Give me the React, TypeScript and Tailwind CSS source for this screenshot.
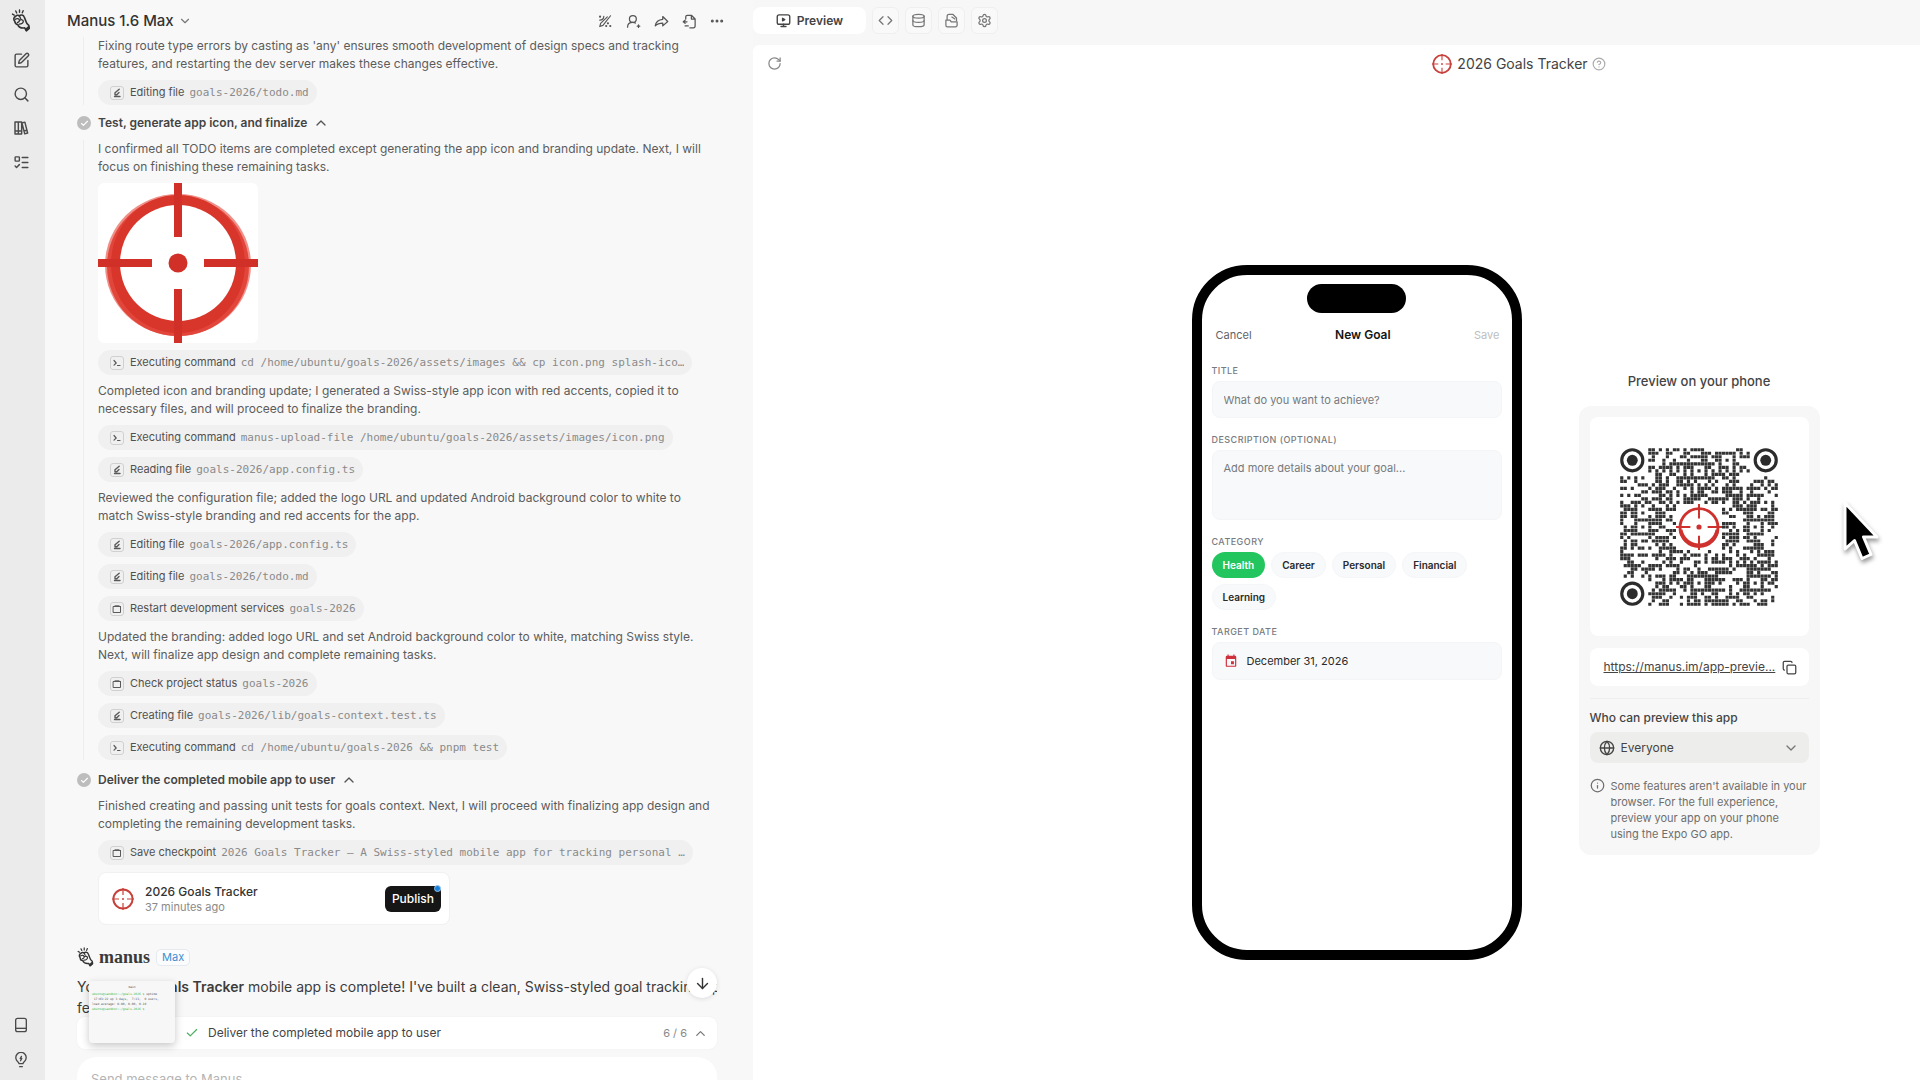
import React from "react";
import {
  ArrowDown,
  Check,
  ChevronDown,
  ChevronUp,
  CircleHelp,
  Code,
  Copy,
  Database,
  Ellipsis,
  Globe,
  Info,
  ListTodo,
  RotateCw,
  Search,
  Settings,
  SquarePen,
} from "lucide-react";

type IconProps = { className?: string };

function Target({ className }: IconProps) {
  return (
    <svg viewBox="0 0 160 160" className={className} aria-hidden="true">
      <ellipse cx="80" cy="82" rx="73" ry="71" fill="#ef8f88" />
      <ellipse cx="80" cy="83" rx="71" ry="70" fill="#e2463b" />
      <ellipse cx="80" cy="81" rx="67" ry="69" fill="#d8352b" />
      <circle cx="80" cy="80" r="58" fill="#fff" />
      <g fill="#d03028">
        <rect x="76" y="0" width="8" height="54" />
        <rect x="76" y="106" width="8" height="54" />
        <rect x="0" y="76" width="54" height="8" />
        <rect x="106" y="76" width="54" height="8" />
        <circle cx="80" cy="80" r="9.5" />
      </g>
    </svg>
  );
}

function TargetBadge({ className }: IconProps) {
  return (
    <svg viewBox="0 0 160 160" className={className} fill="none" stroke="#cf322e" aria-hidden="true">
      <circle cx="80" cy="82" r="66" strokeWidth="10" />
      <path d="M16 90a65 65 0 0 0 128 0" strokeWidth="13" />
      <path d="M80 0v50M80 110v50M0 80h50M110 80h50" strokeWidth="7" />
      <circle cx="80" cy="80" r="9" fill="#cf322e" stroke="none" />
    </svg>
  );
}

function TargetThin({ className }: IconProps) {
  return (
    <svg viewBox="0 0 24 24" className={className} fill="none" stroke="#c8403a" aria-hidden="true">
      <circle cx="12" cy="12" r="9.6" strokeWidth="2" />
      <path d="M12 1v7M12 16v7M1 12h7M16 12h7" strokeWidth="1.2" />
      <circle cx="12" cy="12" r="1" fill="#c8403a" stroke="none" />
    </svg>
  );
}

function ManusMark({ className }: IconProps) {
  return (
    <svg
      viewBox="0 0 24 28"
      className={className}
      fill="none"
      stroke="currentColor"
      strokeWidth="2"
      strokeLinecap="round"
      strokeLinejoin="round"
      aria-hidden="true"
    >
      <path d="M5.600 2.400l1.200 2.400M10.200 1.200v2.800M14.600 2l-1 2.600M1.600 6.200l2.200 1.200" strokeWidth="1.700" />
      <path d="M4.500 15C2.500 13 3 9.500 5.500 9C6 7.500 9 7 10 8.500C11.500 6.500 15 7 15.800 9.500L17.800 14.500C18.500 17 19.500 18.500 21.500 20L22 23.500L18.500 26.500L16.500 23C13 23.500 9.500 22.500 8 19C6 19 4.500 17 4.500 15Z" />
      <path d="M5 12.500c2-1.500 4.500-1 5 .8.500 2-1.200 3-2.500 3.200M10 8.500l1.600 3M10.500 13.500c2-1 4-.5 4.300 1.300.2 2-1.800 3.600-5 3.700" strokeWidth="1.600" />
      <path d="M18.600 25l2.600-2.400" strokeWidth="3.200" />
    </svg>
  );
}

function BooksIcon({ className }: IconProps) {
  return (
    <svg viewBox="0 0 24 24" className={className} fill="none" stroke="currentColor" strokeWidth="2.200" strokeLinejoin="round" aria-hidden="true">
      <path d="M3 3h5v18H3zM8 3h5v18H8zM13.400 4.400l4.400-1.200L22 19.600l-4.400 1.200zM3 16.500h10M16.400 16.600l4.400-1.200" />
    </svg>
  );
}

function TabletIcon({ className }: IconProps) {
  return (
    <svg viewBox="0 0 24 24" className={className} fill="none" stroke="currentColor" strokeWidth="2" strokeLinejoin="round" aria-hidden="true">
      <rect x="4" y="2" width="16" height="20" rx="3" />
      <path d="M4 17h16" />
    </svg>
  );
}

function BulbIcon({ className }: IconProps) {
  return (
    <svg viewBox="0 0 24 24" className={className} fill="none" stroke="currentColor" strokeWidth="2" strokeLinecap="round" strokeLinejoin="round" aria-hidden="true">
      <path d="M9 17.500c0-1.500-1-2.200-2.200-3.300a7.800 7.800 0 1 1 10.400 0C16 15.300 15 16 15 17.500zM10 22h4" />
      <path d="M12.700 6.500l-1.900 3.300h2.400l-1.900 3.300" />
    </svg>
  );
}

function WandIcon({ className }: IconProps) {
  return (
    <svg viewBox="0 0 24 24" className={className} fill="none" stroke="currentColor" strokeWidth="2" strokeLinecap="round" strokeLinejoin="round" aria-hidden="true">
      <path d="M21.500 3L8.500 19.500 3 21.500l1.500-5.500L16 5M3 10.500c3.500 0 6.500-2.500 7-6.500" />
      <path d="M17 16h.1M21 20.500h.1M14 20.500h.1M3.500 4.500h.1" strokeWidth="3.600" />
    </svg>
  );
}

function UserDotIcon({ className }: IconProps) {
  return (
    <svg viewBox="0 0 24 24" className={className} fill="none" stroke="currentColor" strokeWidth="2" strokeLinecap="round" strokeLinejoin="round" aria-hidden="true">
      <circle cx="11" cy="8" r="5.500" />
      <path d="M2.500 21c0-4.500 3.500-7.500 8.500-7.500 1.800 0 3 .4 4 1M18 19.500h4M20 17.500v4" />
    </svg>
  );
}

function ForwardIcon({ className }: IconProps) {
  return (
    <svg viewBox="0 0 24 24" className={className} fill="none" stroke="currentColor" strokeWidth="2" strokeLinejoin="round" aria-hidden="true">
      <path d="M14 4l8 8-8 7v-4.500c-5 0-8.500.5-12 4.500 1-6.500 5-10 12-10.500z" />
    </svg>
  );
}

function FileOutIcon({ className }: IconProps) {
  return (
    <svg viewBox="0 0 24 24" className={className} fill="none" stroke="currentColor" strokeWidth="2" strokeLinecap="round" strokeLinejoin="round" aria-hidden="true">
      <path d="M6 8V4.500A2.500 2.500 0 0 1 8.500 2H15l6 6v11.500a2.500 2.500 0 0 1-2.500 2.500h-6M15 2v6h6" />
      <path d="M2 12.500h6M2 12.500l3-2.500M2 12.500l3 2.500M5 19h5" />
    </svg>
  );
}

function MonitorIcon({ className }: IconProps) {
  return (
    <svg viewBox="0 0 24 24" className={className} fill="none" stroke="currentColor" strokeWidth="2.200" strokeLinecap="round" strokeLinejoin="round" aria-hidden="true">
      <rect x="2" y="3" width="20" height="15" rx="3" />
      <path d="M12 18v3M8 21.500h8" />
      <path d="M10.500 8.500v4l3.500-2z" fill="currentColor" />
    </svg>
  );
}

function FileFoldIcon({ className }: IconProps) {
  return (
    <svg viewBox="0 0 24 24" className={className} fill="none" stroke="currentColor" strokeWidth="2" strokeLinejoin="round" aria-hidden="true">
      <path d="M5 11V5a3 3 0 0 1 3-3h6l6 6v5" />
      <path d="M3 11.500h6.500l2 2.500H21v5.500a2.500 2.500 0 0 1-2.500 2.500h-13A2.500 2.500 0 0 1 3 19.500zM12 6l6 4" />
    </svg>
  );
}

type ChipKind = "edit" | "term" | "box";

function ChipIcon({ kind }: { kind: ChipKind }) {
  return (
    <span className="flex size-[14px] shrink-0 items-center justify-center rounded-[3px] border border-[#d0d0d0] bg-[#f0f0f0] text-[#5a5a5a]">
      <svg viewBox="0 0 12 12" className="size-3" fill="none" stroke="currentColor" strokeWidth="1.2" strokeLinecap="round" strokeLinejoin="round" aria-hidden="true">
        {kind === "edit" && <path d="M8.200 2.200L4 5.800v2h1.800L8 5.500M3.500 9.500h5.500" strokeWidth="1.400" />}
        {kind === "term" && <path d="M3 3.500L5.200 6 3 8.200M6.500 8.500h2.500" />}
        {kind === "box" && <path d="M2.500 3.500h7v6h-7zM2.500 3.500h7M4 2.800h4" strokeWidth="1" />}
      </svg>
    </span>
  );
}

function Chip({ kind, label, code }: { kind: ChipKind; label: string; code: string }) {
  return (
    <button className="flex h-[25px] max-w-full items-center self-start rounded-full bg-[#f0f0f0] pr-2 pl-3 text-left">
      <ChipIcon kind={kind} />
      <span className="ml-[6px] flex min-w-0 items-baseline gap-[5px]">
        <span className="shrink-0 text-[11px] leading-4 text-[#505050]">{label}</span>
        <span className="truncate font-['DejaVu_Sans_Mono',monospace] text-[11px] leading-4 text-[#8a8a8a]">{code}</span>
      </span>
    </button>
  );
}

function Para({ children }: { children: React.ReactNode }) {
  return <p className="text-[12px] leading-[18px] text-[#5c5c5c]">{children}</p>;
}

function StepTitle({ children }: { children: React.ReactNode }) {
  return (
    <button className="flex h-5 items-center self-start">
      <span className="flex size-[14px] items-center justify-center rounded-full bg-[#bdbdbd] text-white">
        <Check className="size-[9px]" strokeWidth={3} />
      </span>
      <span className="ml-[7px] text-[12px] font-semibold text-[#444]">{children}</span>
      <ChevronUp className="ml-[6px] size-4 text-[#555]" />
    </button>
  );
}

const N = 45;

function inFinder(r: number, c: number) {
  return (r < 8 && c < 8) || (r < 8 && c > N - 9) || (r > N - 9 && c < 8);
}

function moduleOn(r: number, c: number) {
  if (inFinder(r, c)) return false;
  if (Math.abs(r - 22) <= 6 && Math.abs(c - 22) <= 6) return false;
  const marks = [6, 22, 38];
  for (const a of marks) {
    for (const b of marks) {
      const dr = Math.abs(r - a);
      const dc = Math.abs(c - b);
      const corner = (a === 6 && b === 6) || (a === 6 && b === 38) || (a === 38 && b === 6);
      if (!corner && dr <= 2 && dc <= 2) return Math.max(dr, dc) !== 1;
    }
  }
  if (r === 6 || c === 6) return (r + c) % 2 === 0;
  let h = (r * 374761393 + c * 668265263) | 0;
  h = Math.imul(h ^ (h >>> 13), 1274126177);
  h = h ^ (h >>> 16);
  return (h & 1023) < 510;
}

function QrCode() {
  let d = "";
  for (let r = 0; r < N; r++) {
    for (let c = 0; c < N; c++) {
      if (moduleOn(r, c)) d += `M${c * 10 + 0.5} ${r * 10 + 0.5}h9v9h-9z`;
    }
  }
  const finders = [
    [35, 35],
    [415, 35],
    [35, 415],
  ];
  return (
    <svg viewBox="0 0 450 450" className="size-[158px]" role="img" aria-label="QR code">
      <path d={d} fill="#333" />
      {finders.map(([x, y]) => (
        <g key={`${x}-${y}`}>
          <circle cx={x} cy={y} r="30" fill="none" stroke="#2c2c2c" strokeWidth="9" />
          <circle cx={x} cy={y} r="15.500" fill="#2c2c2c" />
        </g>
      ))}
    </svg>
  );
}

function Sidebar() {
  const item = "flex size-6 items-center justify-center";
  return (
    <nav className="flex w-[45px] shrink-0 flex-col items-center bg-[#ebebeb] pt-2 pr-[3px] pb-2 text-[#4a4a4a]" aria-label="Main">
      <a href="#home" className={item} aria-label="Home"><ManusMark className="h-[23px] w-5 text-[#333]" /></a>
      <div className="mt-4 flex flex-col gap-[10px]">
        <button className={item} aria-label="New task"><SquarePen className="size-[17px]" /></button>
        <button className={item} aria-label="Search"><Search className="size-[17px]" /></button>
        <button className={item} aria-label="Library"><BooksIcon className="size-4" /></button>
        <button className={item} aria-label="Tasks"><ListTodo className="size-[17px]" /></button>
      </div>
      <div className="mt-auto flex flex-col gap-[11px]">
        <button className={item} aria-label="Devices"><TabletIcon className="size-4" /></button>
        <button className={item} aria-label="Tips"><BulbIcon className="size-4" /></button>
      </div>
    </nav>
  );
}

function Thumbnail() {
  return (
    <div className="absolute bottom-[37px] left-3 h-[62px] w-[86px] overflow-hidden rounded-[4px] bg-[#f7f7f7] px-[3px] pt-1 font-['DejaVu_Sans_Mono',monospace] text-[3px] leading-[5px] whitespace-pre text-[#555] shadow-[0_3px_8px_rgba(0,0,0,0.22)]">
      <p className="text-center">main</p>
      <p className="mt-[2px]"><span className="text-[#3fb83f]">ubuntu@sandbox:~/goals-2026 $</span> uptime</p>
      <p> 17:03:22 up 3 days,  7:13,  0 users,</p>
      <p>load average: 0.00, 0.00, 0.10</p>
      <p className="text-[#3fb83f]">ubuntu@sandbox:~/goals-2026 $</p>
    </div>
  );
}

function Chat() {
  const tool = "flex size-[18px] items-center justify-center";
  return (
    <section className="relative flex w-[708px] shrink-0 flex-col bg-[#f8f8f8]">
      <header className="flex h-[33px] shrink-0 items-end justify-between pr-[27px] pl-[22px]">
        <button className="flex h-6 items-center gap-1 text-[15px] font-medium text-[#333]">
          Manus 1.6 Max <ChevronDown className="size-[14px] text-[#777]" />
        </button>
        <div className="flex h-6 items-center gap-[10px] text-[#555]">
          <button className={tool} aria-label="Skills"><WandIcon className="size-[14px]" /></button>
          <button className={tool} aria-label="Collaborate"><UserDotIcon className="size-[15px]" /></button>
          <button className={tool} aria-label="Share"><ForwardIcon className="size-[15px]" /></button>
          <button className={tool} aria-label="Files"><FileOutIcon className="size-[15px]" /></button>
          <button className={tool} aria-label="More"><Ellipsis className="size-4" strokeWidth={2.500} /></button>
        </div>
      </header>

      <div className="min-h-0 flex-1 overflow-hidden pt-1 pr-9 pl-8">
        <div className="ml-[6px] flex flex-col gap-[7px] border-l border-[#ededed] pl-[14px]">
          <Para>
            Fixing route type errors by casting as 'any' ensures smooth development of design specs and tracking
            <br />
            features, and restarting the dev server makes these changes effective.
          </Para>
          <Chip kind="edit" label="Editing file" code="goals-2026/todo.md" />
        </div>

        <div className="mt-2"><StepTitle>Test, generate app icon, and finalize</StepTitle></div>
        <div className="mt-[7px] ml-[6px] flex flex-col gap-[7px] border-l border-[#ededed] pl-[14px]">
          <Para>
            I confirmed all TODO items are completed except generating the app icon and branding update. Next, I will
            <br />
            focus on finishing these remaining tasks.
          </Para>
          <div className="size-40 overflow-hidden rounded-md bg-white"><Target className="size-full" /></div>
          <Chip kind="term" label="Executing command" code="cd /home/ubuntu/goals-2026/assets/images && cp icon.png splash-ico…" />
          <Para>
            Completed icon and branding update; I generated a Swiss-style app icon with red accents, copied it to
            <br />
            necessary files, and will proceed to finalize the branding.
          </Para>
          <Chip kind="term" label="Executing command" code="manus-upload-file /home/ubuntu/goals-2026/assets/images/icon.png" />
          <Chip kind="edit" label="Reading file" code="goals-2026/app.config.ts" />
          <Para>
            Reviewed the configuration file; added the logo URL and updated Android background color to white to
            <br />
            match Swiss-style branding and red accents for the app.
          </Para>
          <Chip kind="edit" label="Editing file" code="goals-2026/app.config.ts" />
          <Chip kind="edit" label="Editing file" code="goals-2026/todo.md" />
          <Chip kind="box" label="Restart development services" code="goals-2026" />
          <Para>
            Updated the branding: added logo URL and set Android background color to white, matching Swiss style.
            <br />
            Next, will finalize app design and complete remaining tasks.
          </Para>
          <Chip kind="box" label="Check project status" code="goals-2026" />
          <Chip kind="edit" label="Creating file" code="goals-2026/lib/goals-context.test.ts" />
          <Chip kind="term" label="Executing command" code="cd /home/ubuntu/goals-2026 && pnpm test" />
        </div>

        <div className="mt-[10px]"><StepTitle>Deliver the completed mobile app to user</StepTitle></div>
        <div className="mt-[7px] flex flex-col gap-[7px] pl-[21px]">
          <Para>
            Finished creating and passing unit tests for goals context. Next, I will proceed with finalizing app design and
            <br />
            completing the remaining development tasks.
          </Para>
          <Chip kind="box" label="Save checkpoint" code="2026 Goals Tracker – A Swiss-styled mobile app for tracking personal …" />
          <div className="flex h-[53px] w-[352px] items-center rounded-lg border border-[#f1f1f1] bg-white pr-2 pl-3">
            <TargetThin className="size-6" />
            <div className="ml-[10px] flex-1">
              <h3 className="text-[12px] leading-[17px] font-medium text-[#333]">2026 Goals Tracker</h3>
              <p className="text-[11px] leading-[15px] text-[#8a8a8a]">37 minutes ago</p>
            </div>
            <button className="relative h-[26px] rounded-md bg-[#161616] px-[7px] text-[12px] font-medium text-white">
              Publish
              <span className="absolute -top-px right-0 size-[7px] rounded-full border border-[#8fc4ef] bg-[#1a80d9]" />
            </button>
          </div>
        </div>

        <div className="mt-5 flex h-6 items-center">
          <ManusMark className="h-5 w-[17px] text-[#333]" />
          <span className="ml-[5px] font-['Liberation_Serif',serif] text-[18px] leading-6 font-bold text-[#3a3a3a]">manus</span>
          <span className="ml-[6px] rounded-[5px] border border-[#e6e9ee] bg-[#fbfcfd] px-[5px] text-[11px] leading-[15px] text-[#3d8fd1]">Max</span>
        </div>
        <p className="mt-[7px] overflow-hidden text-[14px] leading-[21px] whitespace-nowrap text-[#3c3c3c]">
          Your <strong className="font-semibold">2026 Goals Tracker</strong> mobile app is complete! I've built a clean, Swiss-styled goal tracking app
          <br />
          featuring:
        </p>
      </div>

      <footer className="relative mr-9 ml-8 h-[63px] shrink-0">
        <button className="flex h-8 w-full items-center rounded-lg bg-white pr-[9px] pl-[108px] text-[#444] shadow-[0_0_2px_rgba(0,0,0,0.06)]">
          <Check className="size-[14px] text-[#49ad5b]" />
          <span className="ml-[9px] text-[12px]">Deliver the completed mobile app to user</span>
          <span className="ml-auto text-[11px] text-[#8a8a8a]">6 / 6</span>
          <ChevronUp className="ml-[6px] size-[15px] text-[#777]" />
        </button>
        <Thumbnail />
        <div className="mt-2 h-[23px] overflow-hidden rounded-t-[20px] bg-white">
          <textarea
            aria-label="Message"
            placeholder="Send message to Manus"
            className="h-10 w-full resize-none px-[14px] pt-3 text-[13px] leading-[20px] outline-none placeholder:text-[#b4b4b4]"
          />
        </div>
        <button className="absolute -top-[49px] right-0 flex size-[30px] items-center justify-center rounded-full bg-white text-[#333] shadow-[0_1px_5px_rgba(0,0,0,0.12)]" aria-label="Scroll to bottom">
          <ArrowDown className="size-[17px]" />
        </button>
      </footer>
    </section>
  );
}

function FieldLabel({ children, htmlFor }: { children: React.ReactNode; htmlFor?: string }) {
  const cls = "block text-[9px] leading-3 font-medium tracking-wider text-[#777b80]";
  return htmlFor ? <label htmlFor={htmlFor} className={cls}>{children}</label> : <h4 className={cls}>{children}</h4>;
}

function Phone() {
  const field = "block w-full rounded-lg border border-[#f3f5f7] bg-[#f8f9fa] px-[11px] text-[11px] outline-none placeholder:text-[#75797e]";
  return (
    <div className="h-[695px] w-[330px] shrink-0 rounded-[55px] border-[10px] border-black bg-white px-[10px] pt-[9px]">
      <div className="mx-auto h-[29px] w-[99px] rounded-full bg-black" />
      <div className="mt-3 flex h-5 items-center justify-between pr-[2px] pl-1 text-[11px]">
        <button className="text-[#5f6368]">Cancel</button>
        <h2 className="text-[12px] font-semibold text-[#151515]">New Goal</h2>
        <button className="text-[#bcbec0]" disabled>Save</button>
      </div>
      <div className="mt-5"><FieldLabel htmlFor="goal-title">TITLE</FieldLabel></div>
      <input id="goal-title" className={field + " mt-1 h-[37px]"} placeholder="What do you want to achieve?" />
      <div className="mt-4"><FieldLabel htmlFor="goal-desc">DESCRIPTION (OPTIONAL)</FieldLabel></div>
      <textarea id="goal-desc" className={field + " mt-1 h-[70px] resize-none py-[9px] leading-[17px]"} placeholder="Add more details about your goal..." />
      <div className="mt-4"><FieldLabel>CATEGORY</FieldLabel></div>
      <div className="mt-1 flex flex-wrap gap-x-[6px] gap-y-[6px] text-[10px] font-semibold">
        <button className="h-[26px] rounded-full bg-[#22c55e] px-[11px] text-white">Health</button>
        {["Career", "Personal", "Financial", "Learning"].map((name) => (
          <button key={name} className="h-[26px] rounded-full border border-[#f5f6f8] bg-[#f8f9fa] px-[10px] text-[#2a2a2a]">{name}</button>
        ))}
      </div>
      <div className="mt-4"><FieldLabel>TARGET DATE</FieldLabel></div>
      <button className="mt-1 flex h-[38px] w-full items-center rounded-lg border border-[#f3f5f7] bg-[#f8f9fa] pl-[11px] text-[11px] text-[#2a2a2a]">
        <svg viewBox="0 0 24 24" className="size-[14px]" fill="#d02f3c" aria-hidden="true">
          <path d="M19 3h-1V1h-2v2H8V1H6v2H5a2 2 0 0 0-2 2v15a2 2 0 0 0 2 2h14a2 2 0 0 0 2-2V5a2 2 0 0 0-2-2zm0 17H5V8.500h14zM17 12.500h-5v5h5z" />
        </svg>
        <span className="ml-[9px]">December 31, 2026</span>
      </button>
    </div>
  );
}

function PhonePreview() {
  return (
    <aside className="mt-[106px] w-[241px] shrink-0">
      <h2 className="text-center text-[13px] leading-5 font-medium text-[#444]">Preview on your phone</h2>
      <div className="mt-[15px] rounded-xl bg-[#f7f7f7] p-[11px]">
        <div className="relative flex h-[219px] items-center justify-center rounded-lg bg-white">
          <QrCode />
          <TargetBadge className="absolute size-[46px]" />
        </div>
        <div className="mt-3 flex h-[38px] items-center justify-between rounded-lg bg-white pr-3 pl-[14px] text-[12px] text-[#444]">
          <a href="https://manus.im/app-preview" className="underline">https://manus.im/app-previe...</a>
          <button aria-label="Copy link"><Copy className="size-[15px]" /></button>
        </div>
        <hr className="mt-3 border-[#eeeeee]" />
        <label htmlFor="audience" className="mt-[10px] block text-[12px] leading-[18px] font-medium text-[#444]">Who can preview this app</label>
        <div className="relative mt-[5px] flex items-center text-[#444]">
          <Globe className="pointer-events-none absolute left-[9px] size-4" />
          <select id="audience" className="h-[31px] w-full appearance-none rounded-lg bg-[#ededeb] pl-[31px] text-[12px] outline-none">
            <option>Everyone</option>
          </select>
          <ChevronDown className="pointer-events-none absolute right-[10px] size-4 text-[#777]" />
        </div>
        <div className="mt-[15px] flex gap-[6px] pb-[2px] text-[#6e6e6e]">
          <Info className="size-[15px] shrink-0" />
          <p className="text-[11px] leading-4">
            Some features aren't available in your browser. For the full experience, preview your app on your phone using the Expo GO app.
          </p>
        </div>
      </div>
    </aside>
  );
}

function Workspace() {
  const tab = "flex size-[27px] items-center justify-center rounded-md border border-[#efefef] bg-[#f9f9f9] text-[#777]";
  return (
    <main className="flex min-w-0 flex-1 flex-col bg-[#f7f7f7]">
      <div className="flex h-[45px] shrink-0 items-start gap-[6px] pt-[7px]">
        <button className="flex h-[27px] w-[113px] items-center justify-center gap-[6px] rounded-lg bg-white text-[12px] font-semibold text-[#444]">
          <MonitorIcon className="size-[15px]" />
          Preview
        </button>
        <button className={tab} aria-label="Code"><Code className="size-[15px]" /></button>
        <button className={tab} aria-label="Database"><Database className="size-[15px]" /></button>
        <button className={tab} aria-label="Files"><FileFoldIcon className="size-[15px]" /></button>
        <button className={tab} aria-label="Settings"><Settings className="size-[15px]" /></button>
      </div>
      <div className="min-h-0 flex-1 overflow-hidden rounded-tl-md bg-white">
        <div className="flex h-[37px] items-center pl-[14px]">
          <button aria-label="Reload"><RotateCw className="size-[15px] text-[#888]" /></button>
          <div className="flex flex-1 items-center justify-center pl-[335px]">
            <TargetThin className="size-[22px]" />
            <h1 className="ml-1 text-[14px] text-[#444]">2026 Goals Tracker</h1>
            <CircleHelp className="ml-1 size-[14px] text-[#aaa]" />
          </div>
        </div>
        <div className="mt-[183px] flex items-start justify-center gap-[57px] pl-[338px]">
          <Phone />
          <PhonePreview />
        </div>
      </div>
    </main>
  );
}

export default function App() {
  return (
    <div className="relative flex h-screen overflow-hidden bg-[#f7f7f7] font-['Inter',sans-serif]">
      <Sidebar />
      <Chat />
      <Workspace />
      <svg viewBox="0 0 40 64" className="pointer-events-none absolute top-[499px] left-[1841px] h-16 w-10 drop-shadow-[1px_3px_2px_rgba(0,0,0,0.4)]" aria-hidden="true">
        <path d="M4 4v46l9.500-8.500 7.500 18 9-4-7.500-17.500H36z" fill="#000" stroke="#fff" strokeWidth="3" strokeLinejoin="round" />
      </svg>
    </div>
  );
}
